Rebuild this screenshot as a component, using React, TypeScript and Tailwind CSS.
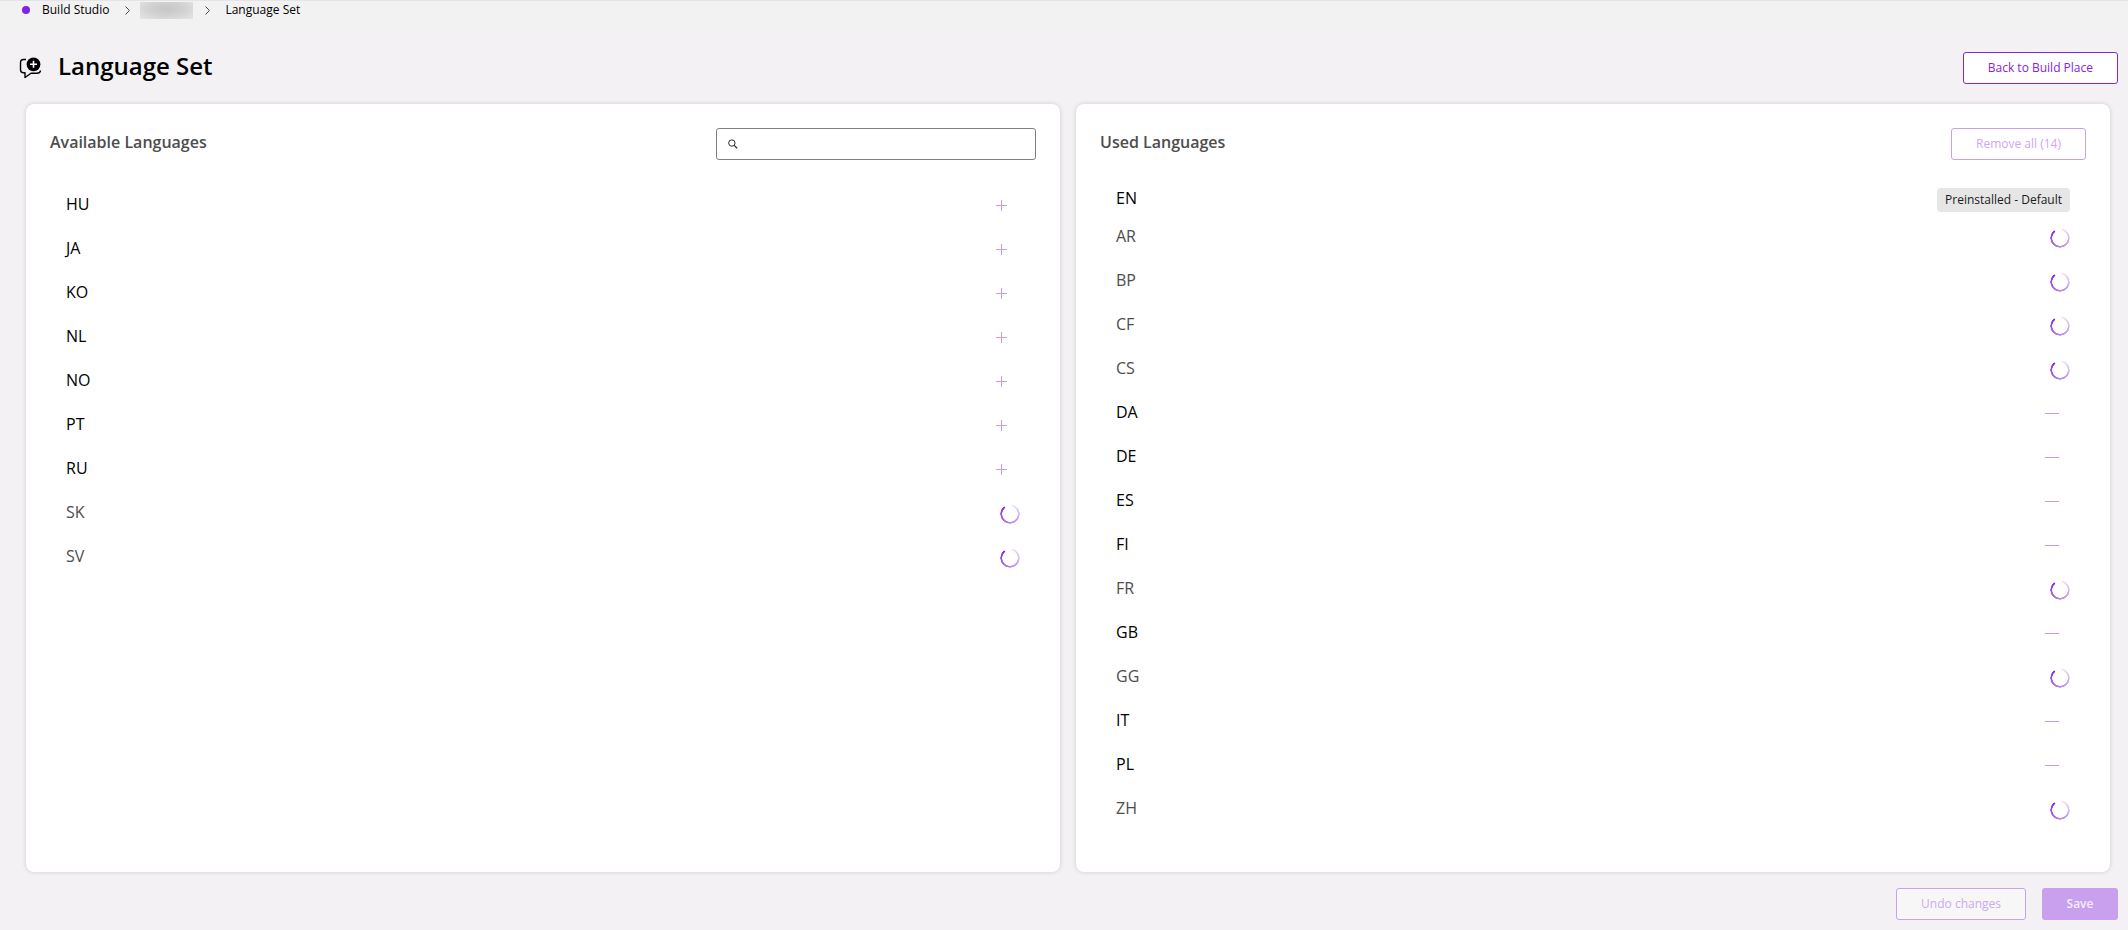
import React from "react";

type Lang = { code: string; busy?: boolean };

const available: Lang[] = [
  { code: "HU" },
  { code: "JA" },
  { code: "KO" },
  { code: "NL" },
  { code: "NO" },
  { code: "PT" },
  { code: "RU" },
  { code: "SK", busy: true },
  { code: "SV", busy: true },
];

const used: Lang[] = [
  { code: "AR", busy: true },
  { code: "BP", busy: true },
  { code: "CF", busy: true },
  { code: "CS", busy: true },
  { code: "DA" },
  { code: "DE" },
  { code: "ES" },
  { code: "FI" },
  { code: "FR", busy: true },
  { code: "GB" },
  { code: "GG", busy: true },
  { code: "IT" },
  { code: "PL" },
  { code: "ZH", busy: true },
];

function Chevron() {
  return (
    <svg viewBox="0 0 5 9" className="h-[9px] w-[5px]" fill="none" stroke="#444" strokeWidth="1" aria-hidden="true">
      <path d="M.5 .5l4 4-4 4" />
    </svg>
  );
}

function Spinner() {
  return (
    <span
      role="status"
      aria-label="Working"
      className="size-5 rounded-full bg-[conic-gradient(from_0deg,#ffffff_0deg,#eee2fa_25deg,#d3b3f5_100deg,#b885ee_180deg,#9a4ce4_270deg,#8224e3_320deg,transparent_326deg)] [mask:radial-gradient(circle,transparent_7.5px,black_8px,black_9.5px,transparent_10px)]"
    />
  );
}

function PlusIcon() {
  return (
    <svg viewBox="0 0 11 11" className="size-[11px]" stroke="currentColor" aria-hidden="true">
      <path d="M5.5 0v11M0 5.5h11" />
    </svg>
  );
}

function MinusIcon() {
  return (
    <svg viewBox="0 0 14 1" className="h-px w-[14px]" stroke="currentColor" aria-hidden="true">
      <path d="M0 .5h14" />
    </svg>
  );
}

function LanguageRow({ lang, action }: { lang: Lang; action: "add" | "remove" }) {
  return (
    <li className="flex h-11 items-center justify-between px-4">
      <span className={lang.busy ? "pb-1 text-[#4d4d4d]" : "pb-1 text-black"}>{lang.code}</span>
      {lang.busy ? (
        <Spinner />
      ) : (
        <button
          type="button"
          disabled
          aria-label={`${action === "add" ? "Add" : "Remove"} ${lang.code}`}
          className={
            action === "add"
              ? "flex h-8 w-[37px] items-center justify-center pb-px text-[#c79bf1]"
              : "flex h-8 w-9 items-center justify-center pb-px text-[#c79bf1]"
          }
        >
          {action === "add" ? <PlusIcon /> : <MinusIcon />}
        </button>
      )}
    </li>
  );
}

export default function App() {
  return (
    <div className="flex min-h-screen flex-col bg-[#f3f1f4] font-['Open_Sans',sans-serif] text-base text-black">
      <nav
        aria-label="Breadcrumb"
        className="h-7 border-t border-[#e6e4e8] bg-[#f3f2f3] px-[22px] text-xs leading-[18px]"
      >
        <ol className="flex items-center">
          <li className="flex items-center gap-3">
            <span className="size-2 rounded-full bg-[#8224e3]" />
            <a href="#studio">Build Studio</a>
          </li>
          <li className="flex items-center gap-[10px] pl-4">
            <Chevron />
            <span className="h-[17px] w-[53px] bg-[radial-gradient(ellipse_at_50%_40%,#c6c6c6,#d2d2d2_50%,#e6e6e6)]" />
          </li>
          <li className="flex items-center gap-[15px] pl-3">
            <Chevron />
            <span>Language Set</span>
          </li>
        </ol>
      </nav>

      <header className="flex items-center justify-between pt-6 pr-[10px] pl-[19px]">
        <div className="flex items-center gap-4">
          <svg viewBox="0 0 23 23" className="size-[23px]" aria-hidden="true">
            <path
              d="M7 2.500H4.500Q1.500 2.500 1.500 5.500V12.500Q1.500 15.700 4.500 15.700H6V20.500L12 16.200H18Q21.300 16.200 21.500 13.500"
              fill="none"
              stroke="#000"
              strokeWidth="1.400"
              strokeLinejoin="round"
            />
            <circle cx="14.500" cy="7.300" r="6.900" />
            <path d="M14.500 3.800v7M11 7.300h7" stroke="#fff" strokeWidth="1.600" />
          </svg>
          <h1 className="pb-1 text-2xl leading-7 font-semibold">Language Set</h1>
        </div>
        <button type="button" className="h-8 rounded-[3px] border border-[#8224e3] bg-white px-6 text-xs text-[#8224e3]">
          Back to Build Place
        </button>
      </header>

      <main className="grid flex-1 grid-cols-2 gap-4 pt-5 pr-[18px] pl-[26px]">
        <section className="rounded-lg bg-white p-6 shadow-[0_0_4px_rgba(0,0,0,0.16)]">
          <div className="flex items-center justify-between">
            <h2 className="pb-1 font-semibold text-[#4d4d4d]">Available Languages</h2>
            <label className="flex h-8 w-80 items-center rounded-[3px] border border-[#808080] bg-white px-[11px]">
              <svg viewBox="0 0 10 10" className="size-[10px]" fill="none" stroke="#222" aria-hidden="true">
                <circle cx="4" cy="4" r="3.300" />
                <path d="M6.400 6.400L9.500 9.500" strokeWidth="1.300" />
              </svg>
              <input type="search" aria-label="Search languages" className="w-full bg-transparent px-2 text-xs outline-none" />
            </label>
          </div>
          <ul className="pt-6">
            {available.map((lang) => (
              <LanguageRow key={lang.code} lang={lang} action="add" />
            ))}
          </ul>
        </section>

        <section className="rounded-lg bg-white p-6 shadow-[0_0_4px_rgba(0,0,0,0.16)]">
          <div className="flex items-center justify-between">
            <h2 className="pb-1 font-semibold text-[#4d4d4d]">Used Languages</h2>
            <button type="button" disabled className="h-8 rounded-[3px] border border-[#c8a0ee] bg-white px-6 text-xs text-[#cda7f4]">
              Remove all (14)
            </button>
          </div>
          <ul className="pt-6">
            <li className="flex h-8 items-center justify-between px-4">
              <span className="pb-1">EN</span>
              <span className="rounded bg-[#e6e6e6] px-2 text-xs leading-6 text-[#1a1a1a]">Preinstalled - Default</span>
            </li>
            {used.map((lang) => (
              <LanguageRow key={lang.code} lang={lang} action="remove" />
            ))}
          </ul>
        </section>
      </main>

      <footer className="flex justify-end gap-4 px-[10px] pt-4 pb-[10px] text-xs">
        <button type="button" disabled className="h-8 rounded-[3px] border border-[#c8a0ee] bg-[#f7f7f7] px-6 text-[#cda7f4]">
          Undo changes
        </button>
        <button type="button" disabled className="h-8 min-w-[76px] rounded-[3px] bg-[#c8a0ee] px-6 font-semibold text-[#f5edfd]">
          Save
        </button>
      </footer>
    </div>
  );
}
